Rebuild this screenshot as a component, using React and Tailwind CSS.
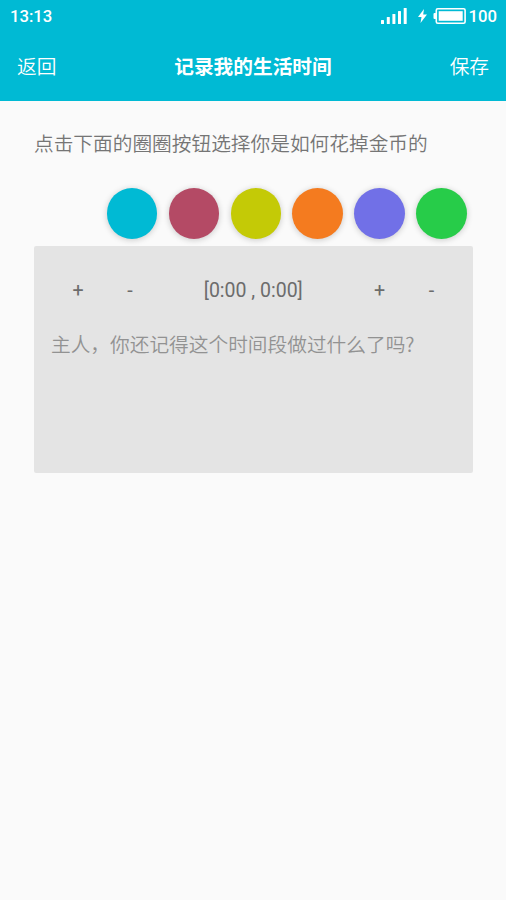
import React, { useState } from "react";

const categories = [
  { id: "cyan", color: "bg-[#00bad4]" },
  { id: "red", color: "bg-[#b44a65]" },
  { id: "lime", color: "bg-[#c4ca06]" },
  { id: "orange", color: "bg-[#f47b1f]" },
  { id: "purple", color: "bg-[#7170e7]" },
  { id: "green", color: "bg-[#27cc49]" },
];

const StatusBar = () => (
  <div className="flex h-8 items-center justify-between pl-[10px] pr-[9px] text-[16.7px] font-medium leading-8">
    <span className="pt-px">13:13</span>
    <div className="flex items-center">
      <svg width="26" height="16" viewBox="0 0 26 16" fill="currentColor">
        <rect x="0" y="12" width="3" height="4" rx="0.5" />
        <rect x="5.8" y="9" width="3" height="7" rx="0.5" />
        <rect x="11.4" y="6" width="3" height="10" rx="0.5" />
        <rect x="17" y="3" width="3" height="13" rx="0.5" />
        <rect x="22.7" y="0" width="3" height="16" rx="0.5" />
      </svg>
      <svg className="ml-[11px]" width="9" height="14" viewBox="0 0 9 14" fill="currentColor">
        <path d="M6 0 0 8h3.5L2.5 14 9 5.5H5.2z" />
      </svg>
      <svg className="ml-[6px]" width="33" height="16" viewBox="0 0 33 16" fill="currentColor">
        <rect x="0.5" y="5" width="3" height="6" rx="1" />
        <rect x="3.3" y="0.8" width="28.8" height="14.4" rx="1.5" fill="none" stroke="currentColor" strokeWidth="1.6" />
        <rect x="5.7" y="3.2" width="24" height="9.6" />
      </svg>
      <span className="ml-[3px] pt-px">100</span>
    </div>
  </div>
);

const Stepper = ({ onAdd, onMinus }) => (
  <div className="flex">
    <button className="w-[52px] text-center" onClick={onAdd}>+</button>
    <button className="w-[52px] text-center" onClick={onMinus}>-</button>
  </div>
);

const App = () => {
  const [start, setStart] = useState(0);
  const [end, setEnd] = useState(0);

  return (
    <div className="min-h-screen bg-[#fafafa] font-[Roboto,'Noto_Sans_CJK_SC',sans-serif] text-[19.7px] text-[#757575]">
      <header className="h-[101px] bg-[#00bad4] text-white">
        <StatusBar />
        <div className="flex h-[69px] items-center justify-between px-[17px] pt-[2px]">
          <button className="font-[350]">返回</button>
          <h1 className="font-bold">记录我的生活时间</h1>
          <button className="font-[350]">保存</button>
        </div>
      </header>

      <main className="pl-[34px] pr-[33.5px] pt-[29px]">
        <p className="h-[30px] whitespace-nowrap font-[350] leading-[30px]">
          点击下面的圈圈按钮选择你是如何花掉金币的
        </p>
        <div className="mt-[28px] flex justify-end gap-[11.3px] pr-[5.7px]">
          {categories.map((item) => (
            <button
              key={item.id}
              className={`h-[50.6px] w-[50.6px] rounded-full shadow-[0_1px_6px_rgba(0,0,0,0.2)] ${item.color}`}
            />
          ))}
        </div>

        <section className="mt-[7.4px] h-[227px] rounded-xs bg-[#e4e4e4] pt-[30px]">
          <div className="flex h-[30px] items-center justify-between pl-[18px] pr-[15px] text-[#6c6c6c]">
            <Stepper onAdd={() => setStart(start + 1)} onMinus={() => setStart(Math.max(0, start - 1))} />
            <span className="-ml-[3px] text-[19.5px]">[{start}:00 , {end}:00]</span>
            <Stepper onAdd={() => setEnd(end + 1)} onMinus={() => setEnd(Math.max(0, end - 1))} />
          </div>
          <p className="mt-[23px] whitespace-nowrap pl-[17px] font-['Noto_Sans_CJK_SC',sans-serif] font-[350] leading-[30px] text-[#929292]">
            主人，你还记得这个时间段做过什么了吗?
          </p>
        </section>
      </main>
    </div>
  );
};

export default App;
